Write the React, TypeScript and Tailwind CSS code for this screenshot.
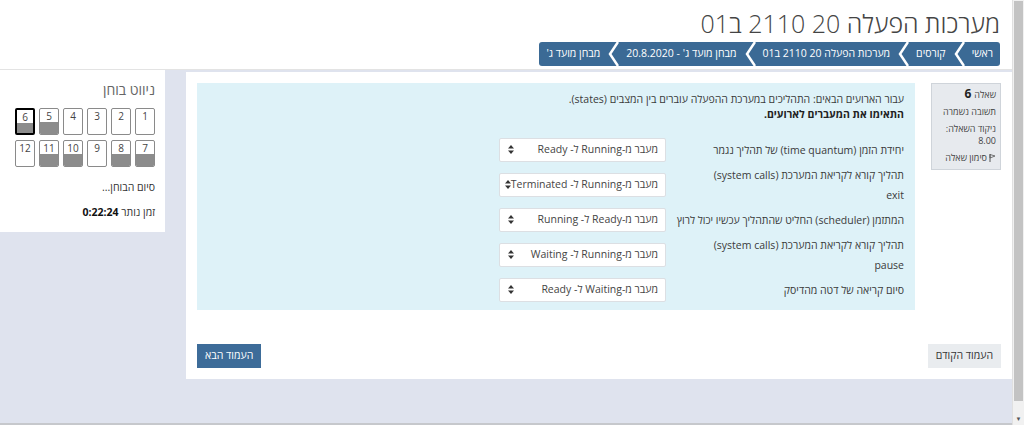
const Chevron = () => (
  <svg width="12" height="24" viewBox="0 0 12 24" className="shrink-0">
    <polyline points="11,0 3,12 11,24" fill="none" stroke="#ffffff" strokeWidth="2.5" />
  </svg>
);

const SelectArrows = () => (
  <svg width="6" height="9" viewBox="0 0 6 9" className="shrink-0">
    <polygon points="3,0 6,3.5 0,3.5" fill="#333" />
    <polygon points="3,9 6,5.5 0,5.5" fill="#333" />
  </svg>
);

const crumbs = ['ראשי', 'קורסים', 'מערכות הפעלה 20 2110 ב01', "מבחן מועד ג' - 20.8.2020", "מבחן מועד ג'"];

const rows: { lines: string[]; value: string }[] = [
  { lines: ['יחידת הזמן (time quantum) של תהליך נגמר'], value: 'מעבר מ-Running ל- Ready' },
  { lines: ['תהליך קורא לקריאת המערכת (system calls)', 'exit'], value: 'מעבר מ-Running ל- Terminated' },
  { lines: ['המתזמן (scheduler) החליט שהתהליך עכשיו יכול לרוץ'], value: 'מעבר מ-Ready ל- Running' },
  { lines: ['תהליך קורא לקריאת המערכת (system calls)', 'pause'], value: 'מעבר מ-Running ל- Waiting' },
  { lines: ['סיום קריאה של דטה מהדיסק'], value: 'מעבר מ-Waiting ל- Ready' },
];

const answered = [5, 6, 7, 8, 10, 11];

const NavButton = ({ n }: { n: number }) => {
  const current = n === 6;
  const done = answered.includes(n);
  return (
    <div
      className={`w-[20px] h-[27px] rounded-[2px] flex flex-col overflow-hidden bg-white ${
        current ? 'border-2 border-black' : 'border border-[#8a8a8a]'
      }`}
    >
      <div className="h-[13px] flex items-center justify-center text-[10px] leading-none text-[#444]">{n}</div>
      <div className={`flex-1 ${done ? 'bg-[#8c8c8c]' : ''}`} />
    </div>
  );
};

const App = () => {
  return (
    <div className="w-[1024px] h-[425px] flex overflow-hidden font-['Open_Sans','Liberation_Sans',sans-serif]">
      <div dir="rtl" className="w-[1012px] h-full flex flex-col bg-[#dfe3ee]">
        <header className="h-[70px] bg-white border-b border-[#e3e3e3] flex flex-col items-start pr-[12px] shrink-0">
          <h1 className="mt-[6px] text-[25px] leading-[34px] font-light text-[#444]">מערכות הפעלה 20 2110 ב01</h1>
          <nav className="mt-[2px] h-[24px] bg-[#3b6a95] rounded-[3px] flex items-center text-white text-[10.5px]">
            {crumbs.map((c, i) => (
              <div key={c} className="flex items-center h-full">
                <span className="px-[7px] whitespace-nowrap">{c}</span>
                {i < crumbs.length - 1 && <Chevron />}
              </div>
            ))}
          </nav>
        </header>

        <div className="flex items-start gap-[21px] flex-1">
          <main className="w-[826px] mt-[2px] bg-white px-[11px] pt-[11px] pb-[11px]">
            <div className="flex items-start gap-[16px]">
              <aside className="w-[70px] h-[87px] shrink-0 bg-[#e7eaee] border border-[#cfd4da] px-[4px] pt-[4px] text-[9px] leading-[12px] text-[#444]">
                <div className="flex items-baseline gap-[3px]">
                  <span>שאלה</span>
                  <span className="text-[12px] font-bold text-[#222]">6</span>
                </div>
                <div className="mt-[5px]">תשובה נשמרה</div>
                <div className="mt-[5px]">ניקוד השאלה:</div>
                <div>8.00</div>
                <div className="mt-[5px] flex items-center gap-[2px]">
                  <svg width="7" height="8" viewBox="0 0 7 8">
                    <line x1="1" y1="0" x2="1" y2="8" stroke="#555" strokeWidth="1" />
                    <polygon points="1,0.5 6,2 1,4" fill="none" stroke="#555" strokeWidth="0.8" />
                  </svg>
                  <span>סימון שאלה</span>
                </div>
              </aside>

              <section className="w-[719px] h-[227px] bg-[#def2f8] pt-[9px] pr-[11px] text-[10.5px] text-[#3a3a3a]">
                <p className="leading-[15px]">עבור הארועים הבאים: התהליכים במערכת ההפעלה עוברים בין המצבים (states).</p>
                <p className="leading-[15px] font-bold text-[#222]">התאימו את המעברים לארועים.</p>
                <div className="mt-[10px] flex flex-col">
                  {rows.map((r) => (
                    <div key={r.value} className="h-[35px] flex items-center">
                      <div className="w-[238px] leading-[20px] whitespace-nowrap">
                        {r.lines.map((l) => (
                          <div key={l}>{l}</div>
                        ))}
                      </div>
                      <div className="w-[167px] h-[24px] bg-white border border-[#dcdfe3] rounded-[2px] flex items-center justify-between pr-[7px] pl-[8px] text-[10.5px] text-[#444]">
                        <span className="whitespace-nowrap">{r.value}</span>
                        <SelectArrows />
                      </div>
                    </div>
                  ))}
                </div>
              </section>
            </div>

            <div className="mt-[34px] flex justify-between">
              <button className="h-[24px] px-[8px] bg-[#e9ecef] text-[10.5px] text-[#333]">העמוד הקודם</button>
              <button className="h-[24px] px-[8px] bg-[#3d6c99] text-[10.5px] text-white">העמוד הבא</button>
            </div>
          </main>

          <div className="w-[165px] h-[162px] bg-white pr-[10px] pt-[10px]">
            <div className="text-[14px] leading-[20px] text-[#666]">ניווט בוחן</div>
            <div className="mt-[8px] grid grid-cols-[repeat(6,20px)] gap-x-[4px] gap-y-[5px]">
              {Array.from({ length: 12 }, (_, i) => (
                <NavButton key={i} n={i + 1} />
              ))}
            </div>
            <div className="mt-[12px] text-[10.5px] leading-[16px] text-[#333]">סיום הבוחן...</div>
            <div className="mt-[9px] text-[10.5px] leading-[16px] text-[#333]">
              זמן נותר <span className="font-bold text-[#111]">0:22:24</span>
            </div>
          </div>
        </div>
        <div className="h-[2px] shrink-0 bg-[#c6c8cc]" />
      </div>
      <div className="w-[12px] h-full bg-[#f1f1f1] border-l border-[#e0e0e0] flex flex-col">
        <div className="mx-[1px] mt-[1px] h-[400px] bg-[#c3c3c3]" />
        <div className="flex-1 flex items-end justify-center pb-[3px] text-[6px] leading-none text-[#555]">▼</div>
      </div>
    </div>
  );
};

export default App;
